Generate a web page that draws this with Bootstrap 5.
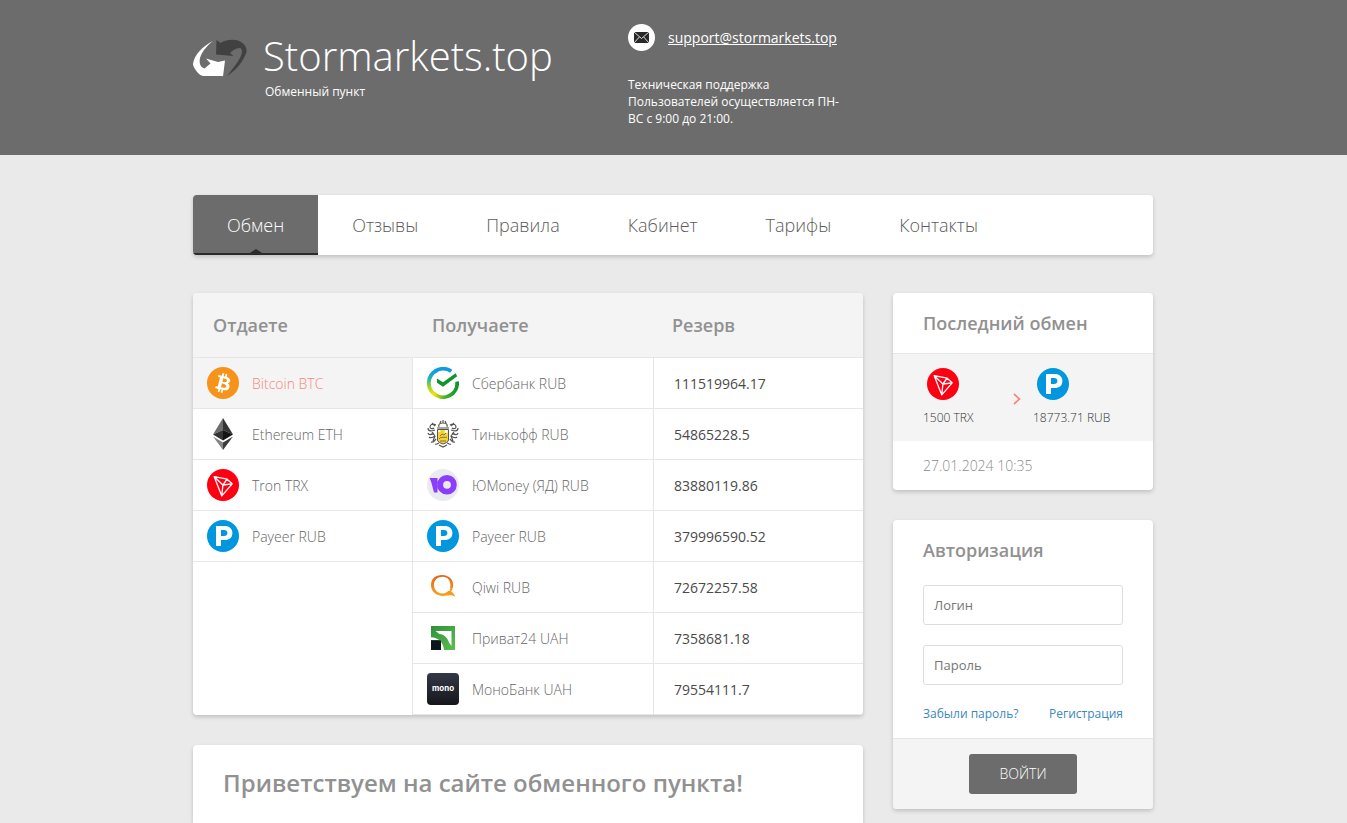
<!DOCTYPE html>
<html lang="ru">
<head>
<meta charset="utf-8">
<meta name="viewport" content="width=device-width, initial-scale=1">
<title>Stormarkets.top — Обменный пункт</title>
<link href="https://cdn.jsdelivr.net/npm/bootstrap@5.3.0/dist/css/bootstrap.min.css" rel="stylesheet">
<style>
  body { font-family: "Open Sans", "Noto Sans", sans-serif; font-size: 14px; background: #eaeaea; color: #4a4a4a; }
  .wrap { width: 100%; max-width: 961px; padding-right: 1px; margin-inline: auto; }
  .site-head { background: #6c6c6c; color: #fff; padding: 24px 0 28px; }
  .brand-col { flex: 0 1 435px; padding-top: 4px; }
  .brand-name { font-size: 40px; line-height: 56px; font-weight: 300; }
  .brand-sub { font-size: 12px; line-height: 16px; padding-left: 2px; }
  .brand-logo { margin-top: 11px; margin-right: 16px; }
  .contact-col { flex: 0 1 215px; }
  .contact-col a { color: #fff; font-size: 14px; }
  .contact-mail { gap: 13px; }
  .support-text { font-size: 12px; line-height: 17px; margin: 25px 0 0; }
  .panel { background: #fff; border-radius: 4px; box-shadow: 0 2px 4px rgba(0,0,0,.18); overflow: hidden; }
  .main-menu { margin: 40px 0 38px; }
  .main-menu .nav-link { color: #5c5c5c; font-size: 18px; font-weight: 300; line-height: 60px; padding: 0 34px; border-radius: 0; }
  .main-menu .nav-link.active { color: #fff; background: #6c6c6c; position: relative; box-shadow: inset 0 -2px 0 #2b2b2b; }
  .main-menu .nav-link.active::after { content: ""; position: absolute; left: calc(50% - 6px); bottom: 2px; border: 6px solid transparent; border-top: 0; border-bottom: 4px solid #2b2b2b; }
  .page-gap { gap: 30px; }
  .main-col { flex: 1 1 0; min-width: 0; }
  .side-col { flex: 0 0 260px; }
  .panel-title { font-size: 18px; line-height: 24px; font-weight: 600; color: #919191; margin: 0; }
  .give-col { flex: 0 0 219px; }
  .give-head, .rates thead th { background: #f4f4f4; border-bottom: 1px solid #e6e6e6; height: 65px; padding: 0 20px; }
  .give-head { display: flex; align-items: center; }
  .give-item { display: flex; align-items: center; gap: 13px; height: 51px; padding: 0 14px; border-bottom: 1px solid #e6e6e6; color: #666; font-weight: 300; text-decoration: none; }
  .give-item.chosen { background: #f4f4f4; color: #f4887a; }
  .rates { table-layout: fixed; border-collapse: separate; border-spacing: 0; width: 100%; }
  .rates td { height: 51px; border-bottom: 1px solid #e6e6e6; border-left: 1px solid #e6e6e6; padding: 0 14px; vertical-align: middle; }
  .rates td:last-child { padding-left: 20px; }
  .rates thead th:last-child { padding-left: 19px; }
  .rates .get-width { width: 241px; }
  .rates a { color: #666; font-weight: 300; text-decoration: none; display: flex; align-items: center; gap: 13px; }
  .coin { width: 32px; height: 32px; flex: none; display: block; }
  .mono-text { font: 700 8px Inter, "Open Sans", sans-serif; }
  .welcome { flex: 1 0 auto; border-radius: 4px 4px 0 0; padding: 22px 30px 24px; }
  .welcome h1 { font-size: 24px; line-height: 32px; font-weight: 600; color: #919191; margin: 0; }
  .side-head { padding: 18px 30px; border-bottom: 1px solid #e6e6e6; }
  .last-swap { background: #f4f4f4; padding: 14px 30px 15px; font-size: 12px; line-height: 17px; font-weight: 300; color: #333; }
  .last-swap .coin { margin: 0 4px 9px; }
  .swap-from { flex: 0 0 88px; }
  .swap-arrow { flex: 0 0 22px; padding: 3px 0 0 2px; }
  .swap-date { padding: 14px 30px; line-height: 21px; font-weight: 300; color: #8c8c8c; }
  .login-body { padding: 18px 30px 15px; }
  .login-body .form-control { height: 40px; border: 1px solid #ddd; border-radius: 3px; padding: 0 10px; font-size: 13px; margin-bottom: 20px; color: #555; }
  .login-body .form-control::placeholder { color: #757575; }
  .login-body .panel-title { margin-bottom: 23px; }
  .login-links { font-size: 12px; line-height: 18px; }
  .login-links a { color: #3a87c0; text-decoration: none; }
  .login-foot { background: #f4f4f4; border-top: 1px solid #e6e6e6; padding: 15px 0; }
  .btn-enter { background: #6c6c6c; color: #fff; font-size: 14px; font-weight: 300; line-height: 20px; height: 40px; padding: 0 30px; border: 0; border-radius: 3px; }
  .btn-enter:hover { background: #5a5a5a; color: #fff; }
</style>
</head>
<body class="d-flex flex-column min-vh-100">

<svg width="0" height="0" class="position-absolute" aria-hidden="true">
  <defs>
    <linearGradient id="sbL" x1="0" y1="0" x2="0" y2="1"><stop offset="0" stop-color="#129bec"/><stop offset=".35" stop-color="#1fb5b0"/><stop offset=".6" stop-color="#7fce3a"/><stop offset="1" stop-color="#f0e60a"/></linearGradient>
    <linearGradient id="sbR" x1="0" y1="0" x2="1" y2="0"><stop offset="0" stop-color="#f0e60a"/><stop offset=".5" stop-color="#44b02a"/><stop offset="1" stop-color="#10952e"/></linearGradient>
    <linearGradient id="qw" x1="0" y1="0" x2="0" y2="1"><stop offset="0" stop-color="#e0661c"/><stop offset="1" stop-color="#f9a51a"/></linearGradient>
    <linearGradient id="mn" x1="0" y1="0" x2="0" y2="1"><stop offset="0" stop-color="#343746"/><stop offset="1" stop-color="#16171c"/></linearGradient>
    <linearGradient id="pv" x1="0" y1="0" x2="1" y2="1"><stop offset="0" stop-color="#2f8f3c"/><stop offset="1" stop-color="#5cbf4e"/></linearGradient>
  </defs>
  <symbol id="btc" viewBox="0 0 32 32"><circle cx="16" cy="16" r="16" fill="#f7931a"/><path fill="#fff" d="M23.2 14c.3-2.1-1.300-3.300-3.500-4l.7-2.900-1.700-.4-.7 2.800-1.400-.3.7-2.800-1.700-.4-.7 2.800-3.500-.9-.5 1.900s1.300.3 1.200.3c.7.2.8.6.8 1l-2 7.900c-.1.200-.3.500-.8.400 0 0-1.200-.3-1.200-.3l-.9 2 3.400.8-.7 2.900 1.700.4.700-2.900 1.400.4-.7 2.800 1.700.4.700-2.900c3 .6 5.200.3 6.100-2.300.8-2.100 0-3.400-1.500-4.200 1.100-.2 1.900-1 2.200-2.500zm-3.900 5.500c-.500 2.100-4.100 1-5.300.7l.9-3.800c1.200.3 5 .900 4.400 3.100zm.6-5.500c-.5 1.900-3.500.9-4.500.7l.9-3.500c1 .3 4.100.7 3.600 2.800z"/></symbol>
  <symbol id="eth" viewBox="0 0 32 32"><path fill="#6d6d6d" d="M16 0 6 16.500l10-4.600z"/><path fill="#343434" d="m16 0 10 16.500-10-4.600z"/><path fill="#343434" d="M16 11.900v10.500L6 16.500z"/><path fill="#141414" d="M16 11.900v10.500l10-5.900z"/><path fill="#858585" d="m6 18.500 10 5.900V32z"/><path fill="#3c3c3b" d="m26 18.500-10 5.900V32z"/></symbol>
  <symbol id="trx" viewBox="0 0 32 32"><circle cx="16" cy="16" r="16" fill="#ff0013"/><path fill="none" stroke="#fff" stroke-width="1.300" stroke-linejoin="round" d="m7.200 7.700 12.900 2.500 5.100 4.600-10.400 12.100zM7.200 7.700l8.700 8.300 4.200-5.800M15.900 16l9.300-1.200M15.900 16l-1.100 10.900"/></symbol>
  <symbol id="payeer" viewBox="0 0 32 32"><circle cx="16" cy="16" r="16" fill="#0097de"/><path fill="#fff" fill-rule="evenodd" d="M9 6h8.500c5 0 7.900 2.700 7.900 7s-3 7.100-7.900 7.100H14V26H9zm5 4v6h3c2.200 0 3.400-1.100 3.400-3s-1.200-3-3.400-3z"/></symbol>
  <symbol id="sber" viewBox="0 0 32 32"><g fill="none" stroke-width="3.800"><path stroke="#119be0" d="M24.300 4.200A14.100 14.100 0 0 0 8 4.400"/><path stroke="url(#sbL)" d="M9.500 3.500A14.100 14.100 0 0 0 7.500 27.300"/><path stroke="url(#sbR)" d="M6.500 26.400A14.100 14.100 0 0 0 30.100 14.500"/></g><path fill="#10952e" d="M10 11.500 16 15.300 28.600 6.200 30.200 9.300 16 19.700 10 15.800z"/></symbol>
  <symbol id="tinkoff" viewBox="0 0 32 32"><g fill="none" stroke="#555" stroke-width="1.200"><path d="M12 9c-1-3 1-4 4-4s5 1 4 4M13 5l1-2m2 2V2m3 3-1-2M10 10h12M9 7c-4-2-6 0-6 2s3 2 4 1M23 7c4-2 6 0 6 2s-3 2-4 1M1 10c0 4 4 3 7 2M31 10c0 4-4 3-7 2M1 15c1 3 4 1 6 0M31 15c-1 3-4 1-6 0M2 19c2 2 4 0 6-1M30 19c-2 2-4 0-6-1M4 24c3 1 4-2 5-3M28 24c-3 1-4-2-5-3M8 26c2 1 3-1 4-1M24 26c-2 1-3-1-4-1M5 14l3 4-2 5M27 14l-3 4 2 5M12 27l4 2 4-2M5 5l3 3M27 5l-3 3"/></g><path fill="#f3d23b" stroke="#555" d="M10.500 11.500h11V22c0 2-3 3-5.500 4-2.500-1-5.500-2-5.500-4z"/><path fill="none" stroke="#8a7420" d="M12 21c2-3 6-1 8-2m-7-1 2-2 2 1 2-2M13 23h6"/><path fill="#fff" d="M17.500 12.200h3.200v2.600h-3.200zM11.300 12.200h2v1.800h-2z"/></symbol>
  <symbol id="yoo" viewBox="0 0 32 32"><circle cx="16" cy="16" r="16" fill="#e9ebee"/><path fill="#8b3ffd" fill-rule="evenodd" d="M2.600 9h7.900v14.500H7L4.300 13.300zM20 6a9.800 9.800 0 1 1 0 19.600A9.800 9.800 0 0 1 20 6zm0 5.900a3.900 3.900 0 1 0 0 7.800 3.900 3.900 0 0 0 0-7.800z"/></symbol>
  <symbol id="qiwi" viewBox="0 0 32 32"><path fill="url(#qw)" fill-rule="evenodd" d="M15 4c6.500 0 11.200 4.300 11.200 10 0 2.600-.8 4.700-2.200 6.500 2 1.400 3.800 3 4.200 5.300-1.800-1.300-3.600-1.500-5.500-1.500-2 .100-4 .6-6.400.6C9 24.900 4 20.400 4 14S8.600 4 15 4zm.8 1.700C10.500 5.700 7 9 7 13.900s3.500 8.500 8.600 8.500c1.500 0 2.600-.3 3.700-.9 2.700-1.500 4.100-4 4.100-7.300 0-5-3-8.500-7.600-8.500z"/><path fill="#fff" d="m21.500 15.500.5 1.700 2 .1-1.400 1.200.7 1.800-1.800-.8-1.400.9.200-1.800-1.300-1.100 1.800-.3z"/></symbol>
  <symbol id="privat" viewBox="0 0 32 32"><path fill="url(#pv)" d="M4 4h24v24H4z"/><path fill="#fff" d="M8.500 9H24.500v15L22 20.500c-1.500-4.500-4.500-8-9.500-8.500z"/><path fill="#fff" d="M4 15.200c7 0 12.500 4.800 13 12.800h-3V18H4z"/><path fill="#0c141d" d="M4 18.300h10V28H4z"/></symbol>
</svg>

<header class="site-head">
  <div class="wrap d-flex align-items-start">
    <div class="brand-col d-flex">
      <svg class="brand-logo flex-shrink-0" width="54" height="38" viewBox="0 0 54 38" aria-hidden="true">
        <path fill="#fff" d="M20 2C10 7 1 16 0 25c0 2 1 3 2 5 2 3 4 6 8 7h19.500l.5.500L32 21.500l-7 1.500-12-3.500 4.500 5-6 5C7 28 6 24 7 19 9 12 15 6 20 2z"/>
        <path fill="#414141" d="m23.500 1 4 3C33 .5 43-.5 48 3c4 2 6 6 5.500 10C51 21 44 31 34 37c7-9 14-17 15-24 0-2-1-4-2-4-4 0-8 3-10 5l3.500 3L23 15.500z"/>
      </svg>
      <div>
        <div class="brand-name">Stormarkets.top</div>
        <div class="brand-sub">Обменный пункт</div>
      </div>
    </div>
    <div class="contact-col">
      <div class="contact-mail d-flex align-items-center">
        <svg width="27" height="27" viewBox="0 0 27 27" class="flex-shrink-0" aria-hidden="true"><circle cx="13.500" cy="13.500" r="13.500" fill="#fff"/><path fill="#292929" d="M6 8h15v11H6z"/><path fill="none" stroke="#ddd" d="m6 8 7.500 6.500L21 8M6 19l5.300-6M21 19l-5.300-6"/></svg>
        <a href="mailto:support@stormarkets.top">support@stormarkets.top</a>
      </div>
      <p class="support-text">Техническая поддержка Пользователей осуществляется ПН-ВС с 9:00 до 21:00.</p>
    </div>
  </div>
</header>

<div class="wrap d-flex flex-column flex-grow-1">
  <nav class="panel main-menu">
    <ul class="nav">
      <li class="nav-item"><a class="nav-link active" aria-current="page" href="#">Обмен</a></li>
      <li class="nav-item"><a class="nav-link" href="#">Отзывы</a></li>
      <li class="nav-item"><a class="nav-link" href="#">Правила</a></li>
      <li class="nav-item"><a class="nav-link" href="#">Кабинет</a></li>
      <li class="nav-item"><a class="nav-link" href="#">Тарифы</a></li>
      <li class="nav-item"><a class="nav-link" href="#">Контакты</a></li>
    </ul>
  </nav>

  <div class="d-flex page-gap flex-grow-1">
    <main class="main-col d-flex flex-column page-gap">
      <section class="panel d-flex">
        <div class="give-col">
          <div class="give-head"><h2 class="panel-title">Отдаете</h2></div>
          <a class="give-item chosen" href="#"><svg class="coin"><use href="#btc"/></svg>Bitcoin BTC</a>
          <a class="give-item" href="#"><svg class="coin"><use href="#eth"/></svg>Ethereum ETH</a>
          <a class="give-item" href="#"><svg class="coin"><use href="#trx"/></svg>Tron TRX</a>
          <a class="give-item" href="#"><svg class="coin"><use href="#payeer"/></svg>Payeer RUB</a>
        </div>
        <div class="flex-grow-1">
          <table class="rates">
            <thead><tr><th class="panel-title get-width" scope="col">Получаете</th><th class="panel-title" scope="col">Резерв</th></tr></thead>
            <tbody>
              <tr><td><a href="#"><svg class="coin"><use href="#sber"/></svg>Сбербанк RUB</a></td><td>111519964.17</td></tr>
              <tr><td><a href="#"><svg class="coin"><use href="#tinkoff"/></svg>Тинькофф RUB</a></td><td>54865228.5</td></tr>
              <tr><td><a href="#"><svg class="coin"><use href="#yoo"/></svg>ЮMoney (ЯД) RUB</a></td><td>83880119.86</td></tr>
              <tr><td><a href="#"><svg class="coin"><use href="#payeer"/></svg>Payeer RUB</a></td><td>379996590.52</td></tr>
              <tr><td><a href="#"><svg class="coin"><use href="#qiwi"/></svg>Qiwi RUB</a></td><td>72672257.58</td></tr>
              <tr><td><a href="#"><svg class="coin"><use href="#privat"/></svg>Приват24 UAH</a></td><td>7358681.18</td></tr>
              <tr><td><a href="#"><svg class="coin" viewBox="0 0 32 32"><rect width="32" height="32" rx="4" fill="url(#mn)"/><text class="mono-text" x="16" y="18" text-anchor="middle" fill="#fff">mono</text></svg>МоноБанк UAH</a></td><td>79554111.7</td></tr>
            </tbody>
          </table>
        </div>
      </section>
      <section class="panel welcome"><h1>Приветствуем на сайте обменного пункта!</h1></section>
    </main>

    <aside class="side-col d-flex flex-column page-gap">
      <section class="panel">
        <div class="side-head"><h2 class="panel-title">Последний обмен</h2></div>
        <div class="last-swap d-flex align-items-center">
          <div class="swap-from"><svg class="coin"><use href="#trx"/></svg>1500 TRX</div>
          <div class="swap-arrow"><svg width="8" height="12" viewBox="0 0 8 12" class="d-block" aria-hidden="true"><path d="m1 1 5.500 5L1 11" fill="none" stroke="#f4887a" stroke-width="1.700"/></svg></div>
          <div class="text-nowrap"><svg class="coin"><use href="#payeer"/></svg>18773.71 RUB</div>
        </div>
        <div class="swap-date">27.01.2024 10:35</div>
      </section>
      <form class="panel">
        <div class="login-body">
          <h2 class="panel-title">Авторизация</h2>
          <input class="form-control" type="text" placeholder="Логин" aria-label="Логин">
          <input class="form-control" type="password" placeholder="Пароль" aria-label="Пароль">
          <div class="login-links d-flex justify-content-between"><a href="#">Забыли пароль?</a><a href="#">Регистрация</a></div>
        </div>
        <div class="login-foot text-center"><button class="btn btn-enter" type="submit">ВОЙТИ</button></div>
      </form>
    </aside>
  </div>
</div>
<script src="https://cdn.jsdelivr.net/npm/bootstrap@5.3.0/dist/js/bootstrap.bundle.min.js"></script>
</body>
</html>
